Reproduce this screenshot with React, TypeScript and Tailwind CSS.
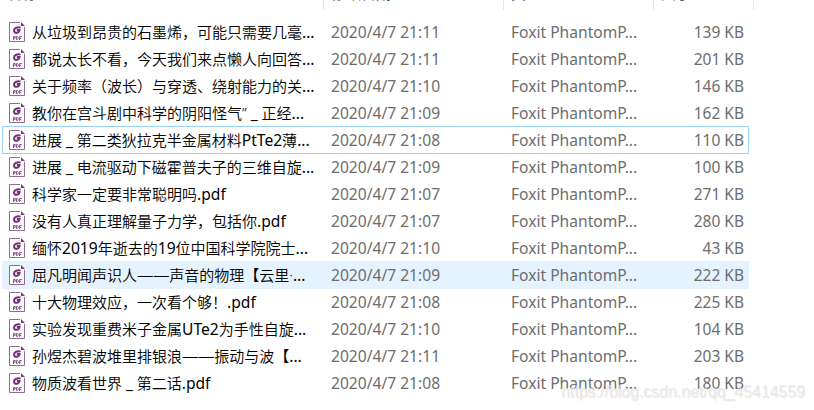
type FileRow = { name: string; date: string; size: string; state?: 'focused' | 'hovered' };

const files: FileRow[] = [
  { name: '从垃圾到昂贵的石墨烯，可能只需要几毫...', date: '21:11', size: '139 KB' },
  { name: '都说太长不看，今天我们来点懒人向回答...', date: '21:11', size: '201 KB' },
  { name: '关于频率（波长）与穿透、绕射能力的关...', date: '21:10', size: '146 KB' },
  { name: '教你在宫斗剧中科学的阴阳怪气”_ 正经...', date: '21:09', size: '162 KB' },
  { name: '进展 _ 第二类狄拉克半金属材料PtTe2薄...', date: '21:08', size: '110 KB', state: 'focused' },
  { name: '进展 _ 电流驱动下磁霍普夫子的三维自旋...', date: '21:09', size: '100 KB' },
  { name: '科学家一定要非常聪明吗.pdf', date: '21:07', size: '271 KB' },
  { name: '没有人真正理解量子力学，包括你.pdf', date: '21:07', size: '280 KB' },
  { name: '缅怀2019年逝去的19位中国科学院院士...', date: '21:10', size: '43 KB' },
  { name: '屈凡明闻声识人——声音的物理【云里·...', date: '21:09', size: '222 KB', state: 'hovered' },
  { name: '十大物理效应，一次看个够！.pdf', date: '21:08', size: '225 KB' },
  { name: '实验发现重费米子金属UTe2为手性自旋...', date: '21:10', size: '104 KB' },
  { name: '孙煜杰碧波堆里排银浪——振动与波【...', date: '21:11', size: '203 KB' },
  { name: '物质波看世界 _ 第二话.pdf', date: '21:08', size: '180 KB' },
];

function PdfIcon() {
  return (
    <svg className="ml-[6px] h-5 w-4 shrink-0" viewBox="0 0 16 20" fill="none">
      <path d="M11 .5H.5v19h15V5" fill="#fff" stroke="#936a98" />
      <path d="M12 0v4h4z" fill="#7a3b80" />
      <path d="M11.6 5.6C8.6 4.6 5 5.9 5 8.6c0 3.2 4.9 3 5.6-.7H7.8" stroke="#73307a" strokeWidth="2" />
      <path
        d="M4.5 18v-3.5h1.7v1.8H4.5M7.5 14.5v3h.9l.8-.8v-1.4l-.8-.8zM10.6 18v-3.5h2M10.6 16.3h1.6"
        stroke="#85508c"
        strokeWidth="1"
      />
    </svg>
  );
}

/** Latin runs are set slightly larger than the Chinese text around them. */
function FileName({ name }: { name: string }) {
  const runs = name.split(/([A-Za-z0-9._]+|——|”)/);
  return (
    <span className="ml-[7px] w-[299px] shrink-0 text-[15px] font-[350] text-black">
      {runs.map((run, i) => {
        if (run === '——') return <span key={i} className="text-[16.5px] tracking-[-0.4px]">{run}</span>;
        if (run === '”') return <span key={i} className="mr-[4px]">{run}</span>;
        return i % 2 ? <span key={i} className="text-[15.6px] font-normal">{run}</span> : run;
      })}
    </span>
  );
}

const rowStyles = {
  focused: 'border-[#99d1ff]',
  hovered: 'border-[#e5f3ff] bg-[#e5f3ff]',
  plain: 'border-transparent',
};

export default function App() {
  return (
    <div className="relative h-[410px] w-[814px] overflow-hidden bg-white font-['Noto_Sans','Noto_Sans_CJK_SC',sans-serif]">
      <header className="flex h-[10px] overflow-hidden text-[15px] leading-5 text-[#4c607a]">
        <div className="w-[324px] border-r border-[#e5e5e5] pl-[7px]"><span className="-mt-[17px] block">名称</span></div>
        <div className="w-[180px] border-r border-[#e5e5e5] pl-[7px]"><span className="-mt-[17px] block">修改日期</span></div>
        <div className="w-[150px] border-r border-[#e5e5e5] pl-[7px]"><span className="-mt-[17px] block">类型</span></div>
        <div className="w-[100px] border-r border-[#e5e5e5] pl-[7px]"><span className="-mt-[17px] block">大小</span></div>
      </header>
      <main className="ml-[2px] mt-2 w-[747px]">
        {files.map((file) => (
          <div
            key={file.name}
            className={`-mb-px flex h-7 items-center whitespace-nowrap border text-[15.5px] leading-6 text-[#6d6d6d] ${rowStyles[file.state ?? 'plain']}`}
          >
            <PdfIcon />
            <FileName name={file.name} />
            <span className="w-[180px] shrink-0 text-[15.6px]">2020/4/7 {file.date}</span>
            <span className="w-[150px] shrink-0 text-[15.6px]">Foxit PhantomP...</span>
            <span className="flex-1 pr-1 text-right">{file.size}</span>
          </div>
        ))}
      </main>
      <div className="absolute left-[561px] top-[382px] whitespace-nowrap font-['Liberation_Sans',Arial,sans-serif] text-[15.9px] leading-5 text-[#e9e9e9]/80 [text-shadow:1px_1px_1px_rgba(0,0,0,0.1)]">
        https://blog.csdn.net/qq_45414559
      </div>
    </div>
  );
}
